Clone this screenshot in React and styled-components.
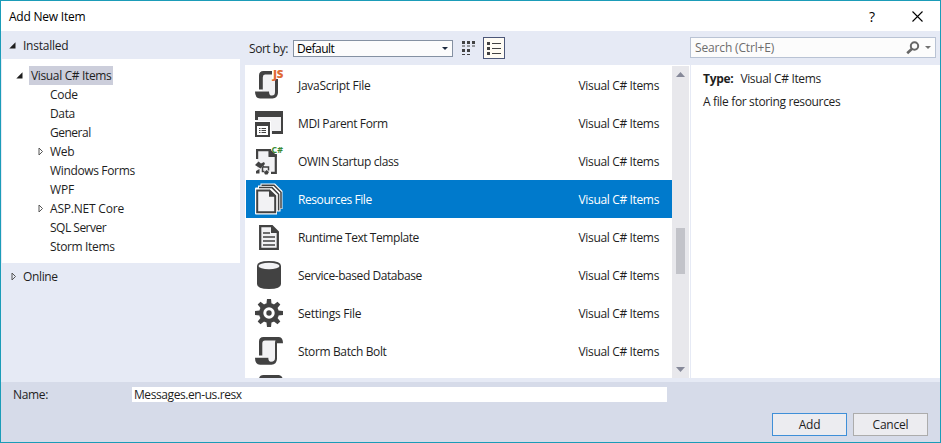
import React from "react";
import styled, { createGlobalStyle, css } from "styled-components";

const GlobalStyle = createGlobalStyle`
  * { box-sizing: border-box; }
  body { margin: 0; background: #fff; }
  button, input { font: inherit; }
`;

const Dialog = styled.div`
  width: 941px;
  height: 443px;
  display: flex;
  flex-direction: column;
  border: 1px solid #1b9cb8;
  background: #e6eaf5;
  color: #1e1e1e;
  font: 12px/19px "Open Sans", "Noto Sans", sans-serif;
  white-space: nowrap;
  overflow: hidden;
`;

const Label = styled.span`
  letter-spacing: ${(p) => p.$ls ?? -0.35}px;
`;

const TitleBar = styled.header`
  height: 30px;
  flex: none;
  display: flex;
  align-items: center;
  padding: 0 17px 0 8px;
  background: #fff;
  color: #000;
`;

const Title = styled.h1`
  flex: 1;
  margin: 0;
  font-size: 12px;
  font-weight: 400;
  letter-spacing: -0.22px;
`;

const HelpMark = styled.span`
  width: 8px;
  margin-right: 35px;
  font-size: 14px;
  font-weight: 500;
`;

const Body = styled.main`
  height: 351px;
  flex: none;
  display: grid;
  grid-template-columns: 244px 445px 250px;
`;

const Sidebar = styled.nav`
  display: flex;
  flex-direction: column;
`;

const Section = styled.div`
  height: ${(p) => p.$height}px;
  display: grid;
  grid-template-columns: ${(p) => 14 - (p.$inset || 0)}px 1fr;
  align-items: center;
  padding-left: ${(p) => 8 + (p.$inset || 0)}px;
`;

const Tree = styled.ul`
  width: 238px;
  height: 204px;
  margin: 0 0 0 1px;
  padding: 7px 0 0;
  list-style: none;
  background: #fff;
`;

const TreeRow = styled.li`
  height: 19px;
  display: flex;
  align-items: center;
  padding-left: ${(p) => (p.$root ? 14 : 36)}px;
`;

const ArrowSlot = styled.span`
  width: ${(p) => (p.$root ? 13 : 10)}px;
  display: flex;
  align-items: center;
`;

const TreeLabel = styled.span`
  height: 19px;
  padding: 0 2px;
  letter-spacing: ${(p) => p.$ls ?? -0.35}px;
  ${(p) => p.$selected && css`background: #cccedb;`}
`;

const Center = styled.section`
  display: flex;
  flex-direction: column;
`;

const Toolbar = styled.div`
  height: 34px;
  flex: none;
  display: flex;
  align-items: center;
  padding-left: 4px;
`;

const SortCaption = styled.span`
  width: 44px;
  letter-spacing: -0.45px;
`;

const SortSelect = styled.div`
  width: 160px;
  height: 17px;
  padding: 0 4px 0 3px;
  display: flex;
  align-items: center;
  justify-content: space-between;
  border: 1px solid #8591a2;
  background: #fcfcfc;
  color: #000;
`;

const ViewButton = styled.button`
  width: 22px;
  height: 22px;
  padding: 0;
  margin-left: ${(p) => p.$gap}px;
  display: flex;
  align-items: center;
  justify-content: center;
  border: 1px solid ${(p) => (p.$active ? "#4c5778" : "transparent")};
  background: ${(p) => (p.$active ? "#fffcf4" : "transparent")};
`;

const ListFrame = styled.div`
  height: 313px;
  display: flex;
  background: #fff;
`;

const List = styled.ul`
  width: 427px;
  height: 313px;
  margin: 0;
  padding: 1px 0 0 1px;
  overflow: hidden;
  list-style: none;
`;

const ListRow = styled.li`
  height: 38px;
  display: grid;
  grid-template-columns: 32px 1fr auto;
  column-gap: 13px;
  align-items: center;
  padding: 0 13px 0 7px;
  background: ${(p) => (p.$selected ? "#007acc" : "#fff")};
  color: ${(p) => (p.$selected ? "#fff" : "#1e1e1e")};
`;

const ScrollBar = styled.div`
  width: 17px;
  height: 312px;
  margin-top: 1px;
  display: flex;
  flex-direction: column;
  align-items: center;
  padding: 6px 0;
  background: #e8e8ec;
`;

const Thumb = styled.div`
  width: 9px;
  height: 46px;
  margin: 151px 0 93px;
  background: #c2c3c9;
`;

const Details = styled.aside`
  display: flex;
  flex-direction: column;
`;

const SearchBox = styled.div`
  width: 246px;
  height: 21px;
  margin: 6px 0 7px;
  padding: 0 4px;
  flex: none;
  display: flex;
  align-items: center;
  gap: 5px;
  border: 1px solid #b9c3d4;
  background: #fcfcfc;
  color: #6d6d6d;
`;

const SearchHint = styled.span`
  flex: 1;
  letter-spacing: -0.15px;
`;

const Info = styled.div`
  height: 313px;
  padding: 4px 12px;
  background: #fff;
  border-left: 1px solid #e6eaf5;
`;

const InfoLine = styled.p`
  height: 19px;
  margin: 0 0 4px;
  display: flex;
  gap: 7px;
`;

const Strong = styled.strong`
  font-weight: 700;
  letter-spacing: -0.3px;
`;

const Footer = styled.footer`
  flex: 1;
  padding: 5px 12px 0;
  background: #d6dbe9;
`;

const NameRow = styled.label`
  height: 15px;
  display: flex;
  align-items: center;
`;

const NameCaption = styled.span`
  width: 119px;
  letter-spacing: -0.35px;
`;

const NameInput = styled.input`
  width: 535px;
  height: 15px;
  border: 0;
  padding: 0 2px;
  outline: 0;
  background: #fff;
  color: #1e1e1e;
  letter-spacing: -0.42px;
`;

const Actions = styled.div`
  display: flex;
  justify-content: flex-end;
  gap: 6px;
  margin-top: 11px;
`;

const ActionButton = styled.button`
  width: 75px;
  height: 23px;
  padding: 0;
  line-height: 19px;
  letter-spacing: -0.2px;
  border: 1px solid ${(p) => (p.$primary ? "#3f8fd8" : "#acacac")};
  background: #ececf0;
  color: #1e1e1e;
`;

const Icon = styled.svg`
  display: block;
  flex: none;
  overflow: visible;
`;

const Glyph = ({ w, h, children }) => (
  <Icon width={w} height={h} viewBox={`0 0 ${w} ${h}`}>{children}</Icon>
);

const Expanded = () => (
  <Glyph w={7} h={7}><path d="M6.5 0.3V6.5H0.3Z" fill="#1e1e1e" /></Glyph>
);
const Collapsed = () => (
  <Glyph w={6} h={9}><path d="M1 1V8L4.5 4.5Z" fill="none" stroke="#555" /></Glyph>
);
const Caret = ({ color }) => (
  <Glyph w={6} h={3}><path d="M0 0H6L3 3Z" fill={color} /></Glyph>
);

const DARK = "#424242";
const LIGHT = "#f2f2f4";

const drawings = {
  script: (
    <g>
      <path d="M9 5H19V10H24V27H15V22H9Z" fill={LIGHT} />
      <path d="M6 20.5V6.5Q6 2 10.5 2H19V5.6H12Q9.8 5.8 9.8 8.5V20.5Z" fill={DARK} />
      <path d="M22 10H25V24Q24.5 29.4 19.5 29.4H7Q2 29.2 2 22.4H16Q16 26.6 19 26.6Q22 26.6 22 23Z" fill={DARK} />
      <text x="20" y="9" fontFamily="Open Sans, sans-serif" fontWeight="800" fontSize="10" letterSpacing="-0.3" textLength="10" lengthAdjust="spacingAndGlyphs" fill="#e06a35">JS</text>
    </g>
  ),
  form: (
    <g>
      <rect x="3" y="8" width="26" height="19" fill={LIGHT} />
      <path d="M2 4H30V27H19V24H28V10H5V13H2Z" fill={DARK} />
      <rect x="1" y="14" width="17" height="17" fill="#fff" />
      <path d="M2 15H17V30H2ZM4 19V28H15V19Z" fill={DARK} fillRule="evenodd" />
      <path d="M6 21.5H7.5M6 23.5H7.5M6 25.5H7.5M8.5 21.5H13M8.5 23.5H13M8.5 25.5H13" stroke={DARK} />
    </g>
  ),
  owin: (
    <g>
      <path d="M4 6H17L22 11V27H4Z" fill={LIGHT} />
      <path d="M4.1 14V5.1H17V10H22.8V27.9H18" fill="none" stroke={DARK} strokeWidth="2.2" />
      <path d="M15.5 4.2H17L23.8 10.5V12H15.5Z" fill={DARK} />
      <path d="M2 20L5.5 16.5L8 18.5L11 17L12 19L7.5 23.5L5 22ZM3 28.5V26L6.5 24V28.5Z" fill={DARK} />
      <path d="M9 20L11 22H15.5V25.5M9.5 22V26.5H11.5" stroke={DARK} strokeWidth="1.5" fill="none" />
      <path d="M11 27.5L13.5 25L16 27L14.5 29.5H12Z" fill={DARK} />
      <text x="18.6" y="8.2" fontFamily="Open Sans, sans-serif" fontWeight="700" fontSize="9.5" textLength="11.4" lengthAdjust="spacingAndGlyphs" fill="#388a34">C#</text>
    </g>
  ),
  resources: (
    <g>
      <path d="M2 5.5Q2 4.5 3 4.5H5V2.5H7.5V.5H22L29.5 8V26H27.5V28.5H24V31.5H3Q2 31.5 2 30.5Z" fill="#fff" />
      <path d="M8.5 2.2H21L28 9.2V25.5" fill="none" stroke={DARK} strokeWidth="1.5" />
      <path d="M6 4.6H19L25.6 11.2V27.5" fill="none" stroke={DARK} strokeWidth="1.5" />
      <path d="M4.2 7.4H16.5L22.2 13V29.2H4.2Z" fill={LIGHT} stroke={DARK} strokeWidth="2" />
      <path d="M16 6.4L23.2 13.8H16Z" fill={DARK} />
    </g>
  ),
  text: (
    <g>
      <path d="M7.2 5.2H19L24.8 11V27.8H7.2Z" fill={LIGHT} stroke={DARK} strokeWidth="2.3" />
      <path d="M18 4L26 12H18Z" fill={DARK} />
      <path d="M10 12H17M10 16H22M10 20H22M10 24H22" stroke={DARK} strokeWidth="1.7" />
    </g>
  ),
  database: (
    <g>
      <path d="M4 7Q4 2 16 2T28 7V25Q28 30 16 30T4 25Z" fill={DARK} />
      <ellipse cx="16" cy="7" rx="10.5" ry="3.2" fill={LIGHT} />
    </g>
  ),
  gear: (
    <g fill={DARK}>
      {[0, 45, 90, 135, 180, 225, 270, 315].map((a) => (
        <path key={a} d="M13.2 9L14 2H18L18.8 9Z" transform={`rotate(${a} 16 16)`} />
      ))}
      <circle cx="16" cy="16" r="10" />
      <circle cx="16" cy="16" r="5.7" fill="#fff" />
      <circle cx="16" cy="16" r="2.7" />
    </g>
  ),
  scroll: (
    <g>
      <path d="M9 5H22V27H15V22H9Z" fill={LIGHT} />
      <path
        d="M6 20.5V6.5Q6 2 10.5 2H26Q30 2.5 30 8.2H24V24Q23.5 29.7 18.5 29.7H7Q2 29.5 2 22.8H15.3Q15.3 26.8 18 26.8Q22 26.8 22 23V8Q22 6.5 22.5 5.6H12Q9.3 5.8 9.3 8.5V20.5Z"
        fill={DARK}
      />
    </g>
  ),
};

const ItemIcon = ({ name }) => <Glyph w={32} h={32}>{drawings[name]}</Glyph>;

const items = [
  { icon: "script", name: "JavaScript File", ls: -0.27 },
  { icon: "form", name: "MDI Parent Form", ls: -0.4 },
  { icon: "owin", name: "OWIN Startup class", ls: -0.37 },
  { icon: "resources", name: "Resources File", ls: -0.42, selected: true },
  { icon: "text", name: "Runtime Text Template", ls: -0.43 },
  { icon: "database", name: "Service-based Database", ls: -0.43 },
  { icon: "gear", name: "Settings File", ls: -0.26 },
  { icon: "scroll", name: "Storm Batch Bolt", ls: -0.37 },
  { icon: "scroll", name: "" },
];

const tree = [
  { name: "Visual C# Items", root: true },
  { name: "Code", ls: -0.25 },
  { name: "Data" },
  { name: "General", ls: -0.5 },
  { name: "Web", arrow: true, ls: -0.3 },
  { name: "Windows Forms" },
  { name: "WPF", ls: -0.2 },
  { name: "ASP.NET Core", arrow: true, ls: -0.2 },
  { name: "SQL Server", ls: -0.5 },
  { name: "Storm Items" },
];

export default function App() {
  return (
    <>
      <GlobalStyle />
      <Dialog>
        <TitleBar>
          <Title>Add New Item</Title>
          <HelpMark>?</HelpMark>
          <Glyph w={11} h={11}>
            <path d="M.5 .5L10.5 10.5M10.5 .5L.5 10.5" stroke="#000" strokeWidth="1.1" />
          </Glyph>
        </TitleBar>
        <Body>
          <Sidebar>
            <Section $height={28}><Expanded /><Label $ls={-0.25}>Installed</Label></Section>
            <Tree>
              {tree.map((t) => (
                <TreeRow key={t.name} $root={t.root}>
                  <ArrowSlot $root={t.root}>
                    {t.root && <Expanded />}
                    {t.arrow && <Collapsed />}
                  </ArrowSlot>
                  <TreeLabel $selected={t.root} $ls={t.ls}>{t.name}</TreeLabel>
                </TreeRow>
              ))}
            </Tree>
            <Section $height={26} $inset={2}><Collapsed /><Label>Online</Label></Section>
          </Sidebar>
          <Center>
            <Toolbar>
              <SortCaption>Sort by:</SortCaption>
              <SortSelect><Label $ls={-0.5}>Default</Label><Caret color="#1b293e" /></SortSelect>
              <ViewButton $gap={5}>
                <Glyph w={14} h={14}>
                  <path d="M0 0h3v3H0zM5 0h3v3H5zM10 0h3v3H10zM0 8h3v3H0zM5 8h3v3H5zM0 4.5h3v1H0zM5 4.5h3v1H5zM10 4.5h3v1H10zM0 13h3v1H0zM5 13h3v1H5z" fill={DARK} />
                </Glyph>
              </ViewButton>
              <ViewButton $gap={3} $active>
                <Glyph w={14} h={13}>
                  <path d="M0 0h3v3H0zM0 5h3v3H0zM0 10h3v3H0zM5 1h9v1H5zM5 6h9v1H5zM5 11h9v1H5z" fill={DARK} />
                </Glyph>
              </ViewButton>
            </Toolbar>
            <ListFrame>
              <List>
                {items.map((it, i) => (
                  <ListRow key={i} $selected={it.selected}>
                    <ItemIcon name={it.icon} />
                    <Label $ls={it.ls}>{it.name}</Label>
                    <Label>{it.name && "Visual C# Items"}</Label>
                  </ListRow>
                ))}
              </List>
              <ScrollBar>
                <Glyph w={9} h={5}><path d="M0 5L4.5 0L9 5Z" fill="#868999" /></Glyph>
                <Thumb />
                <Glyph w={9} h={5}><path d="M0 0L4.5 5L9 0Z" fill="#868999" /></Glyph>
              </ScrollBar>
            </ListFrame>
          </Center>
          <Details>
            <SearchBox>
              <SearchHint>Search (Ctrl+E)</SearchHint>
              <Glyph w={14} h={14}>
                <circle cx="8.5" cy="5" r="3.7" fill="none" stroke="#666" strokeWidth="2" />
                <path d="M6 7.8L1.2 12.2" stroke="#666" strokeWidth="2.6" />
              </Glyph>
              <Caret color="#717171" />
            </SearchBox>
            <Info>
              <InfoLine><Strong>Type:</Strong><Label>Visual C# Items</Label></InfoLine>
              <InfoLine><Label>A file for storing resources</Label></InfoLine>
            </Info>
          </Details>
        </Body>
        <Footer>
          <NameRow>
            <NameCaption>Name:</NameCaption>
            <NameInput defaultValue="Messages.en-us.resx" />
          </NameRow>
          <Actions>
            <ActionButton $primary>Add</ActionButton>
            <ActionButton>Cancel</ActionButton>
          </Actions>
        </Footer>
      </Dialog>
    </>
  );
}
